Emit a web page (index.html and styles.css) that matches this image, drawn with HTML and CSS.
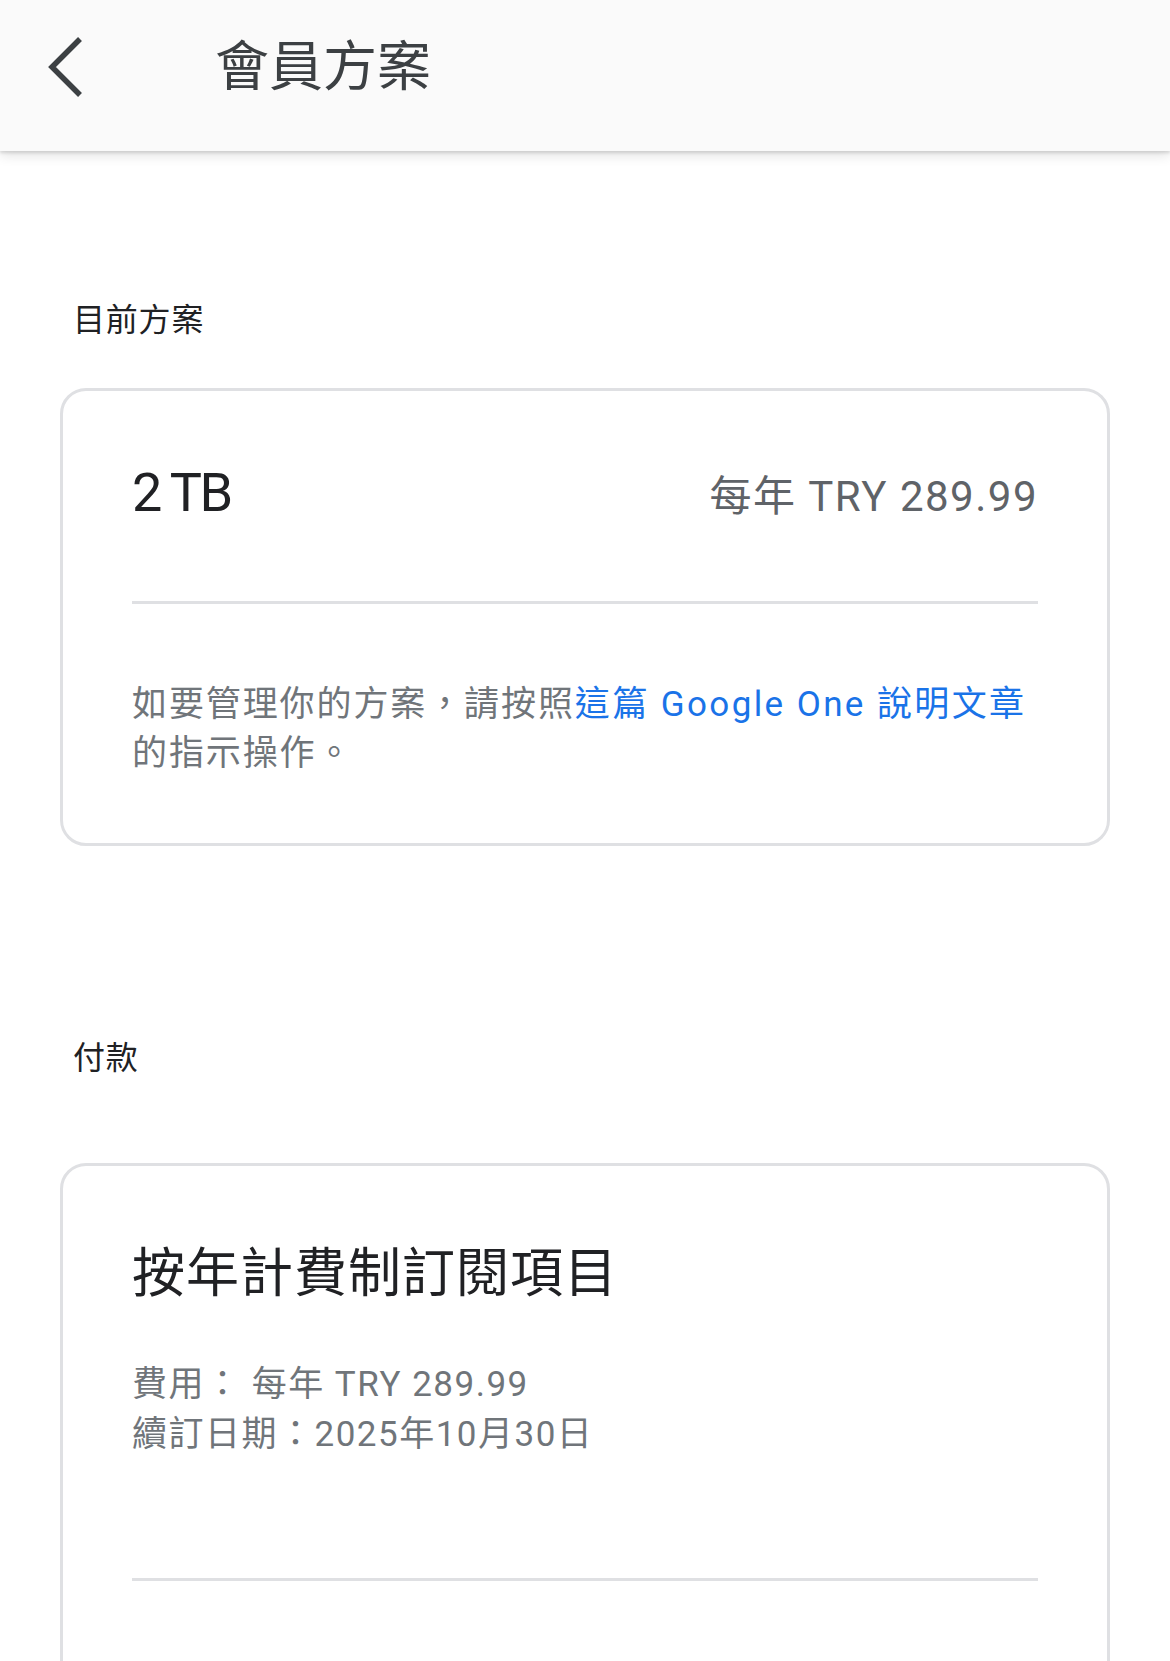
FILE: index.html
```html
<!DOCTYPE html>
<html lang="zh-Hant">
<head>
    <meta charset="utf-8">
    <title>會員方案</title>
    <link rel="stylesheet" href="styles.css">
</head>
<body>

<header class="topbar">
    <button class="back-btn" aria-label="返回">
        <svg width="50" height="75" viewBox="0 0 50 75">
            <polyline points="40,9 12,37 40,65" fill="none" stroke="#3c4043" stroke-width="5.5"/>
        </svg>
    </button>
    <h1 class="topbar-title">會員方案</h1>
</header>

<main class="page">
    <section class="section section-plan">
        <h2 class="section-label">目前方案</h2>
        <div class="card card-plan">
            <div class="plan-row">
                <span class="plan-size">2 TB</span>
                <span class="plan-price">每年 TRY 289.99</span>
            </div>
            <hr class="divider divider-plan">
            <p class="note">如要管理你的方案，請按照<a href="#" class="link">這篇 Google One 說明文章</a><br>的指示操作。</p>
        </div>
    </section>

    <section class="section section-payment">
        <h2 class="section-label">付款</h2>
        <div class="card card-payment">
            <h3 class="sub-title">按年計費制訂閱項目</h3>
            <div class="sub-info">
                <div>費用： 每年 TRY 289.99</div>
                <div>續訂日期：2025年10月30日</div>
            </div>
            <hr class="divider divider-payment">
        </div>
    </section>
</main>

</body>
</html>
```

FILE: styles.css
```css
/* 會員方案頁面 */
body {
    margin: 0;
    background: #fff;
    font-family: Roboto, "Noto Sans CJK TC", sans-serif;
    color: #202124;
}

h1, h2, h3, p {
    margin: 0;
    font-weight: normal;
}

.topbar {
    display: flex;
    align-items: center;
    box-sizing: border-box;
    height: 151px;
    padding: 0 0 16px 40px;
    background: #fafafa;
    box-shadow: 0 2px 3px rgba(0, 0, 0, 0.12), 0 4px 12px rgba(0, 0, 0, 0.12);
}

.back-btn {
    display: flex;
    padding: 0;
    border: 0;
    background: none;
    cursor: pointer;
}

.topbar-title {
    margin-left: 125px;
    font-size: 54px;
    line-height: 64px;
    color: #3c4043;
}

.page {
    padding: 0 60px;
}

.section-label {
    height: 40px;
    padding-left: 13px;
    font-size: 32px;
    line-height: 40px;
    letter-spacing: 0.8px;
    color: #202124;
}

.section-plan .section-label {
    margin-top: 149px;
    margin-bottom: 48px;
}

.section-payment .section-label {
    margin-top: 192px;
    margin-bottom: 85px;
}

.card {
    border: 3px solid #dfe0e3;
    border-radius: 26px;
}

.card-plan {
    padding: 70px 69px 65px;
}

.card-payment {
    padding: 76px 69px 150px;
}

.plan-row {
    display: flex;
    justify-content: space-between;
    align-items: baseline;
}

.plan-size {
    font-size: 54px;
    line-height: 64px;
    letter-spacing: -2.5px;
    color: #202124;
}

.plan-price {
    font-size: 42px;
    line-height: 64px;
    letter-spacing: 1.5px;
    color: #5f6368;
}

.divider {
    height: 3px;
    border: 0;
    background: #dfe0e3;
}

.divider-plan {
    margin: 72px 0 76px;
}

.divider-payment {
    margin: 118px 0 0;
}

.note {
    font-size: 35px;
    line-height: 49px;
    letter-spacing: 1.9px;
    color: #70757a;
}

.link {
    color: #1a73e8;
    letter-spacing: 2.4px;
    text-decoration: none;
}

.sub-title {
    font-size: 53px;
    line-height: 64px;
    letter-spacing: 1px;
    color: #202124;
}

.sub-info {
    margin-top: 54px;
    font-size: 35px;
    line-height: 50px;
    letter-spacing: 1.5px;
    color: #70757a;
}
```
